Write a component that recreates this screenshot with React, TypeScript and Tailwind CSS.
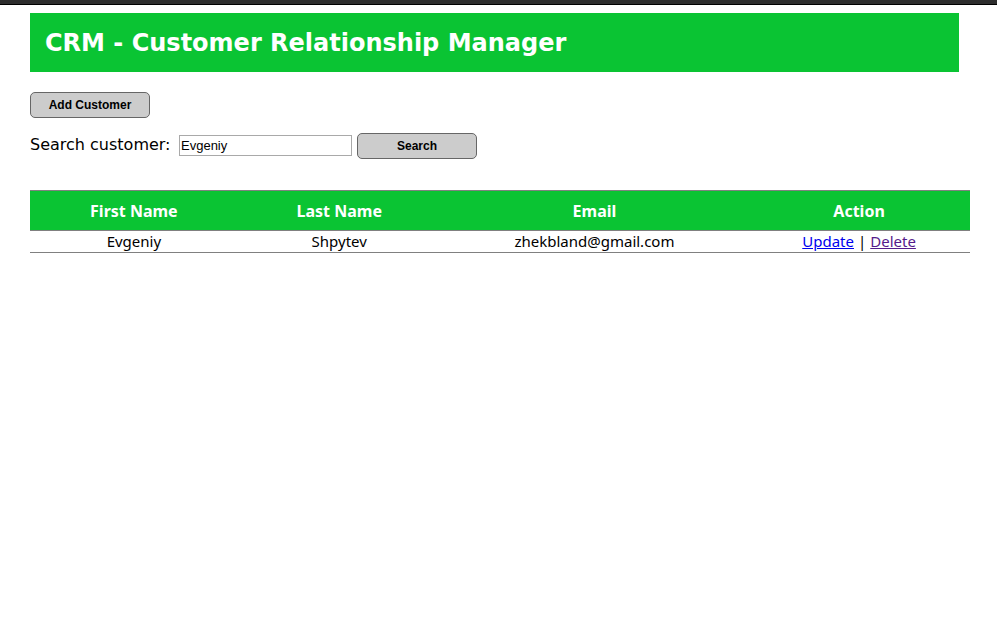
import { useState } from "react";

const customers = [
  { firstName: "Evgeniy", lastName: "Shpytev", email: "zhekbland@gmail.com" },
];

const buttonClass =
  "h-[26px] w-[120px] rounded-[5px] border border-[#666] bg-[#ccc] font-['Liberation_Sans',Arial,sans-serif] text-xs font-bold text-black";

export default function App() {
  const [query, setQuery] = useState("Evgeniy");
  return (
    <div className="min-h-screen bg-white font-['DejaVu_Sans',Verdana,sans-serif] text-base text-black">
      <div className="h-[5px] border-b border-black bg-[#2d2d2d]" />
      <div className="pt-2 pr-[27px] pl-[30px]">
        <header className="mr-[11px] bg-[#0ac433] px-[15px] pt-[15px] pb-[13px]">
          <h1 className="text-2xl leading-[31px] font-bold text-white">CRM - Customer Relationship Manager</h1>
        </header>
        <main>
          <button type="button" className={`mt-5 block ${buttonClass}`}>Add Customer</button>
          <form className="mt-[15px] flex items-start" onSubmit={(e) => e.preventDefault()}>
            <label htmlFor="search" className="w-[149px] leading-6 whitespace-nowrap">Search customer:</label>
            <input
              id="search"
              type="text"
              value={query}
              onChange={(e) => setQuery(e.target.value)}
              className="mt-0.5 h-[21px] w-[173px] border border-[#a9a9a9] bg-white px-px font-['Liberation_Sans',Arial,sans-serif] text-[13px]"
            />
            <button type="submit" className={`ml-[5px] ${buttonClass}`}>Search</button>
          </form>
          <table className="mt-[31px] w-full table-fixed border-collapse border-b border-[#808080] text-center font-['Noto_Sans',Tahoma,sans-serif]">
            <colgroup>
              <col className="w-[22.1%]" />
              <col className="w-[21.6%]" />
              <col className="w-[32.7%]" />
              <col className="w-[23.6%]" />
            </colgroup>
            <thead>
              <tr className="h-10 border-y border-[#808080] bg-[#0ac433] text-white">
                <th>First Name</th>
                <th>Last Name</th>
                <th>Email</th>
                <th>Action</th>
              </tr>
            </thead>
            <tbody>
              {customers.map((c) => (
                <tr key={c.email} className="text-[15px] leading-[21px]">
                  <td>{c.firstName}</td>
                  <td>{c.lastName}</td>
                  <td>{c.email}</td>
                  <td>
                    <a href="#update" className="text-[#0000ee] underline">Update</a>
                    <span className="mx-1">|</span>
                    <a href="#delete" className="text-[#551a8b] underline">Delete</a>
                  </td>
                </tr>
              ))}
            </tbody>
          </table>
        </main>
      </div>
    </div>
  );
}
